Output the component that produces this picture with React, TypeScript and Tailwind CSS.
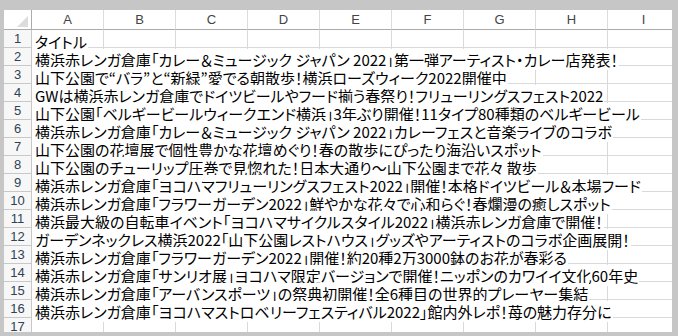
import React from 'react';

const cols = ['A', 'B', 'C', 'D', 'E', 'F', 'G', 'H', 'I'];

const rows = [
  'タイトル',
  '横浜赤レンガ倉庫「カレー＆ミュージック ジャパン 2022」第一弾アーティスト・カレー店発表！',
  '山下公園で“バラ”と“新緑”愛でる朝散歩！横浜ローズウィーク2022開催中',
  'GWは横浜赤レンガ倉庫でドイツビールやフード揃う春祭り！フリューリングスフェスト2022',
  '山下公園「ベルギービールウィークエンド横浜」3年ぶり開催！11タイプ80種類のベルギービール',
  '横浜赤レンガ倉庫「カレー＆ミュージック ジャパン 2022」カレーフェスと音楽ライブのコラボ',
  '山下公園の花壇展で個性豊かな花壇めぐり！春の散歩にぴったり海沿いスポット',
  '山下公園のチューリップ圧巻で見惚れた！日本大通り～山下公園まで花々 散歩',
  '横浜赤レンガ倉庫「ヨコハマフリューリングスフェスト2022」開催！本格ドイツビール＆本場フード',
  '横浜赤レンガ倉庫「フラワーガーデン2022」鮮やかな花々で心和らぐ！春爛漫の癒しスポット',
  '横浜最大級の自転車イベント「ヨコハマサイクルスタイル2022」横浜赤レンガ倉庫で開催！',
  'ガーデンネックレス横浜2022「山下公園レストハウス」グッズやアーティストのコラボ企画展開！',
  '横浜赤レンガ倉庫「フラワーガーデン2022」開催！約20種2万3000鉢のお花が春彩る',
  '横浜赤レンガ倉庫「サンリオ展」ヨコハマ限定バージョンで開催！ニッポンのカワイイ文化60年史',
  '横浜赤レンガ倉庫「アーバンスポーツ」の祭典初開催！全6種目の世界的プレーヤー集結',
  '横浜赤レンガ倉庫「ヨコハマストロベリーフェスティバル2022」館内外レポ！苺の魅力存分に',
  '',
];

function SheetRow({ n, text }: { n: number; text: string }) {
  return (
    <div className="flex h-[18px] shrink-0">
      <div className="w-[28px] shrink-0 border-r border-b border-[#c8c8c8] bg-[#f7f7f7] text-center text-[13px] leading-[17px] text-[#2f4256] font-['Liberation_Sans',sans-serif]">
        {n}
      </div>
      {cols.map((c, i) => (
        <div
          key={c}
          className="w-[72px] shrink-0 border-r border-b border-[#d9d9d9] whitespace-nowrap"
        >
          {i === 0 && text && (
            <span className="relative z-10 bg-white pl-[3px] pr-[1px] text-[15px] leading-[17px] text-black font-['Noto_Sans_CJK_JP',sans-serif] [font-feature-settings:'palt']">
              {text}
            </span>
          )}
        </div>
      ))}
    </div>
  );
}

export default function App() {
  return (
    <div className="w-[678px] h-[336px] bg-[#c6c6c6] pt-[10px] pl-[4px] pr-[6px] pb-[4px]">
      <div className="h-full bg-white overflow-hidden flex flex-col">
        {/* column headers */}
        <div className="flex h-[20px] shrink-0">
          <div className="w-[28px] shrink-0 border-r border-b border-[#ababab] bg-white flex items-end justify-end pr-[3px] pb-[2px]">
            <svg width="11" height="11" viewBox="0 0 11 11">
              <polygon points="11,0 11,11 0,11" fill="#dcdcdc" />
            </svg>
          </div>
          {cols.map((c) => (
            <div
              key={c}
              className="w-[72px] shrink-0 border-r border-b border-r-[#dcdcdc] border-b-[#ababab] bg-white text-center text-[13px] leading-[19px] text-[#444] font-['Liberation_Sans',sans-serif]"
            >
              {c}
            </div>
          ))}
        </div>

        {rows.map((t, i) => (
          <SheetRow key={i} n={i + 1} text={t} />
        ))}
      </div>
    </div>
  );
}
